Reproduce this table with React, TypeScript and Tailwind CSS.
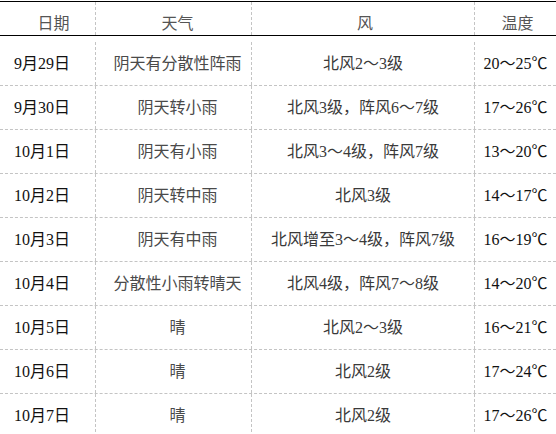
import React from "react";

const rows: [string, string, string, string][] = [
  ["9月29日", "阴天有分散性阵雨", "北风2～3级", "20～25℃"],
  ["9月30日", "阴天转小雨", "北风3级，阵风6～7级", "17～26℃"],
  ["10月1日", "阴天有小雨", "北风3～4级，阵风7级", "13～20℃"],
  ["10月2日", "阴天转中雨", "北风3级", "14～17℃"],
  ["10月3日", "阴天有中雨", "北风增至3～4级，阵风7级", "16～19℃"],
  ["10月4日", "分散性小雨转晴天", "北风4级，阵风7～8级", "14～20℃"],
  ["10月5日", "晴", "北风2～3级", "16～21℃"],
  ["10月6日", "晴", "北风2级", "17～24℃"],
  ["10月7日", "晴", "北风2级", "17～26℃"],
];

const font = {
  fontFamily: '"Liberation Serif", "Times New Roman", Tinos, "Noto Sans CJK SC", serif',
};

export default function App() {
  return (
    <div
      className="w-[556px] h-[434px] overflow-hidden bg-white pt-[1px] text-[16px] leading-none text-[#222]"
      style={font}
    >
      <div className="grid grid-cols-[95px_156px_223px_82px] h-[35px] border-t border-b border-black">
        <div className="flex items-center justify-center pt-[10px] pl-[12px] text-[#555]">日期</div>
        <div className="flex items-center justify-center pt-[10px] pl-[8px] border-l border-dashed border-[#c4c4c4] text-[#555]">天气</div>
        <div className="flex items-center justify-center pt-[10px] pl-[4px] border-l border-dashed border-[#c4c4c4] text-[#555]">风</div>
        <div className="flex items-center justify-center pt-[10px] pl-[4px] border-l border-dashed border-[#c4c4c4] text-[#555]">温度</div>
      </div>
      {rows.map((r, i) => (
        <div
          key={i}
          className={
            "grid grid-cols-[95px_156px_223px_82px] border-b border-dashed border-[#c4c4c4] " +
            (i === 0 ? "h-[50px] pt-[6px]" : "h-[44px]")
          }
        >
          <div className="flex items-center justify-center pr-[11px] text-[#111]">{r[0]}</div>
          <div className="flex items-center justify-center pl-[8px] border-l border-dashed border-[#c4c4c4] text-[#4a4a4a]">{r[1]}</div>
          <div className="flex items-center justify-center border-l border-dashed border-[#c4c4c4] text-[#3a3a3a]">{r[2]}</div>
          <div className="flex items-center justify-center border-l border-dashed border-[#c4c4c4] text-[#111]">{r[3]}</div>
        </div>
      ))}
    </div>
  );
}
